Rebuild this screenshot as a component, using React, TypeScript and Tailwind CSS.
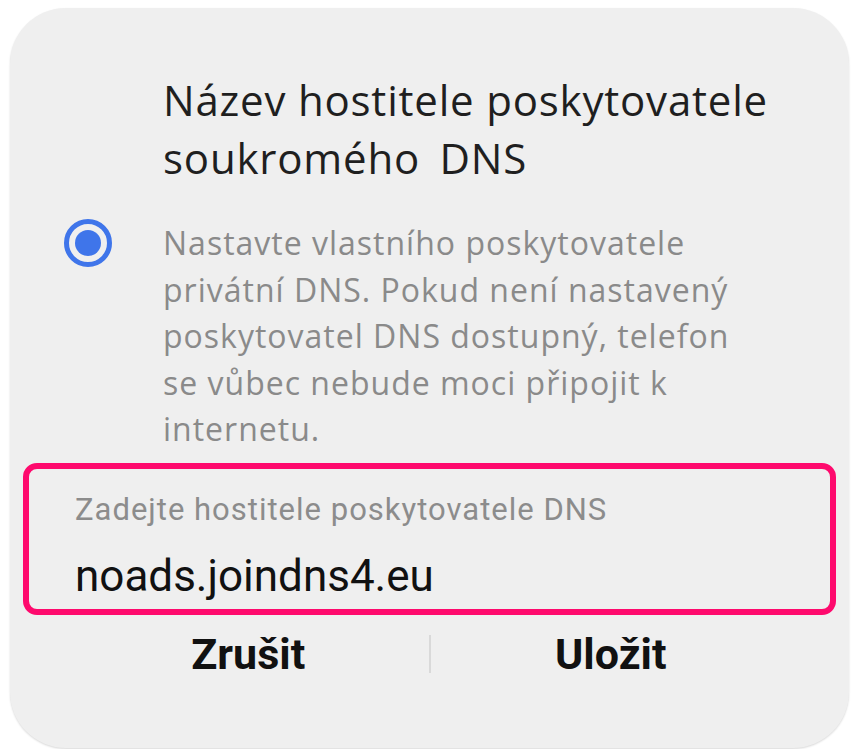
import React, { FC } from 'react'

const App: FC = () => {
  return (
    <div className="min-h-screen w-full bg-white pt-[8px] pl-[10px] pr-[8px]">
      <div className="flex h-[740px] flex-col rounded-[56px] bg-[#efefef] shadow-[0_1px_2px_rgba(0,0,0,0.15)]">
        {/* title */}
        <div className="pt-[63px] pl-[153px] pr-[30px]">
          <h1 className="text-[42px] leading-[58px] font-normal tracking-[0.8px] text-[#1f1f1f] font-['Open_Sans',sans-serif]">
            {'Název hostitele poskytovatele soukromého \u2006DNS'}
          </h1>
        </div>

        {/* radio + description */}
        <div className="mt-[33px] flex items-start">
          <div className="flex w-[153px] shrink-0 pl-[54px]">
            <div className="mt-[-1px] flex h-[48px] w-[48px] items-center justify-center rounded-full border-[5px] border-[#3f75ea]">
              <div className="h-[26px] w-[26px] rounded-full bg-[#3f75ea]" />
            </div>
          </div>
          <p className="pr-[90px] text-[32px] leading-[46.5px] tracking-[1px] text-[#8a8a8a] font-['Open_Sans',sans-serif]">
            Nastavte vlastního poskytovatele privátní DNS. Pokud není nastavený poskytovatel DNS dostupný, telefon se vůbec nebude moci připojit k internetu.
          </p>
        </div>

        {/* input field */}
        <div className="mx-[13px] mt-[10px] h-[152px] shrink-0 rounded-[14px] border-[6px] border-[#fe0a6d] pl-[46px] pt-[23px]">
          <div className="text-[31px] leading-[36px] tracking-[1px] text-[#8c8c8c] font-['Roboto',sans-serif]">
            Zadejte hostitele poskytovatele DNS
          </div>
          <div className="mt-[22px] text-[44px] leading-[52px] text-[#111111] font-['Roboto',sans-serif]">
            noads.joindns4.eu
          </div>
        </div>

        {/* buttons */}
        <div className="mt-[15px] flex items-center px-[58px]">
          <button className="flex-1 text-center text-[43px] leading-[48px] font-bold text-[#111111] font-['Roboto',sans-serif]">
            Zrušit
          </button>
          <div className="h-[38px] w-[2px] bg-[#d9d9d9]" />
          <button className="flex-1 text-center text-[43px] leading-[48px] font-bold text-[#111111] font-['Roboto',sans-serif]">
            Uložit
          </button>
        </div>
      </div>
    </div>
  )
}

export default App
